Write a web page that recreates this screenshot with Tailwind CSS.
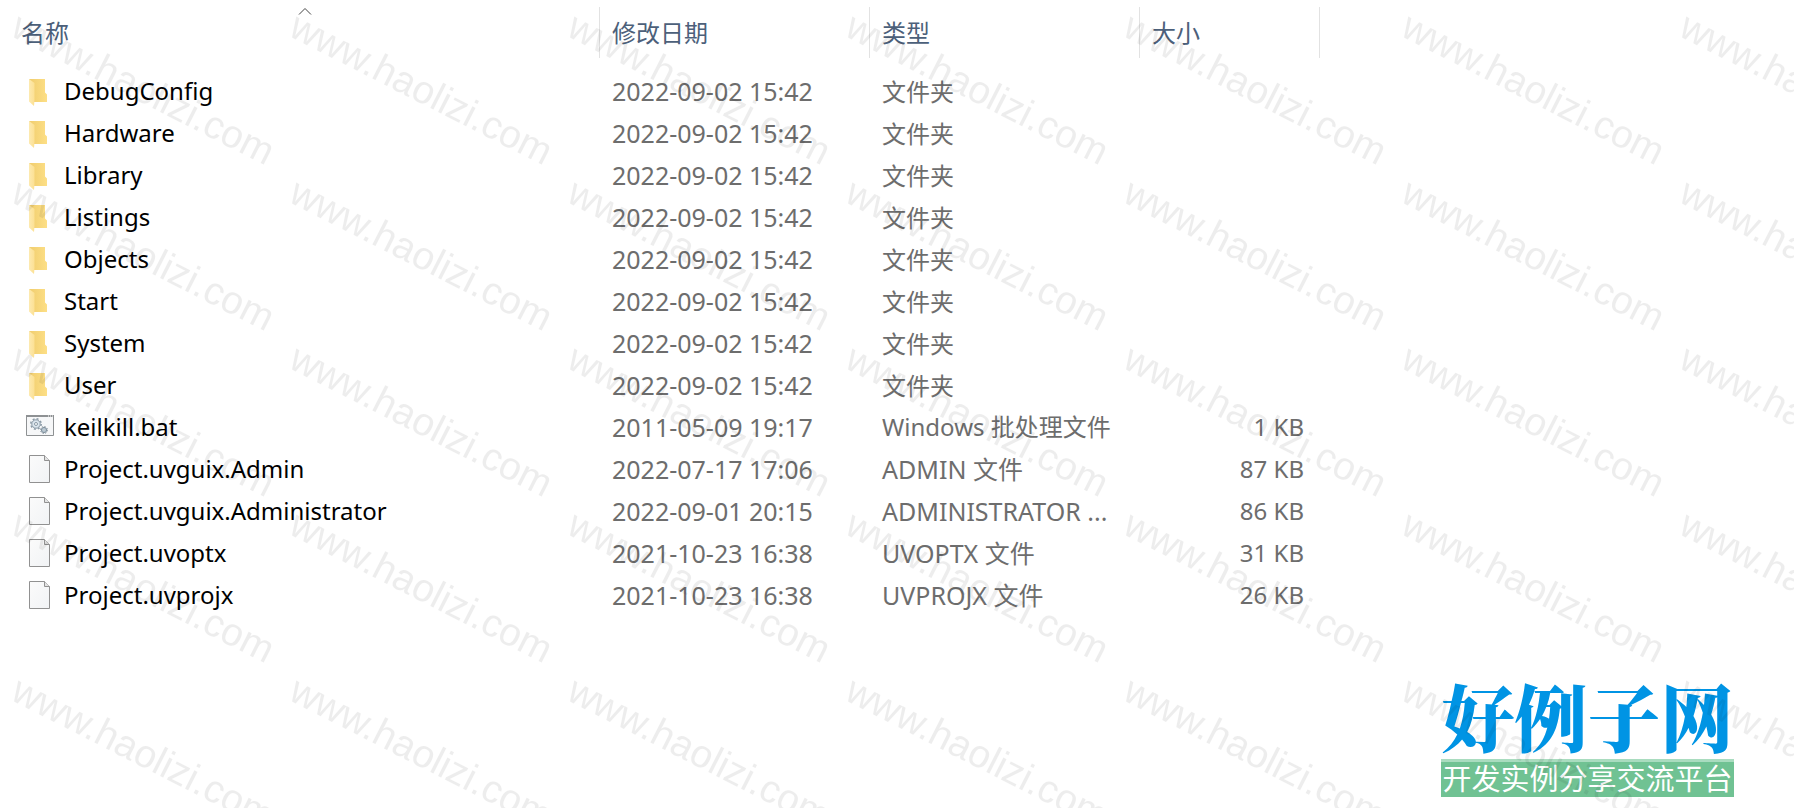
<!DOCTYPE html>
<html lang="zh-CN">

<head>
    <meta charset="UTF-8">
    <meta name="viewport" content="width=device-width, initial-scale=1">
    <title>Project</title>
    <script src="https://cdn.jsdelivr.net/npm/@tailwindcss/browser@4"></script>
</head>

<body class="bg-white font-['Noto_Sans','Noto_Sans_CJK_SC',sans-serif]">
    <!-- Icons -->
    <svg class="absolute size-0">
        <defs>
            <linearGradient id="folderBack" x1="0" x2="1">
                <stop offset="0" stop-color="#f0cd6e" />
                <stop offset="1" stop-color="#fddf86" />
            </linearGradient>
            <linearGradient id="folderFront" x1="0" x2="1">
                <stop offset="0" stop-color="#fdeab0" />
                <stop offset="1" stop-color="#fce093" />
            </linearGradient>
            <linearGradient id="paper" x1="0" y1="0" x2="1" y2="1">
                <stop offset="0" stop-color="#fbfbfb" />
                <stop offset="1" stop-color="#f1f3f5" />
            </linearGradient>
        </defs>
        <symbol id="folder" viewBox="0 0 28 30">
            <path d="M3 2H19V15.500L21 17.500V25H8V14Z" fill="url(#folderBack)" />
            <path d="M3 2L8.500 6V23L8 29L3 24.500Z" fill="url(#folderFront)" />
        </symbol>
        <symbol id="file" viewBox="0 0 28 30">
            <path d="M3.500 .5H18.500L23.500 5.500V27.500H3.500Z" fill="url(#paper)" stroke="#919191" />
            <path d="M18.500 .5V5.500H23.500" fill="#e3e3e3" stroke="#919191" />
        </symbol>
        <symbol id="bat" viewBox="0 0 28 30">
            <path d="M.5 2.500H27.500V22.500H.5Z" fill="#f6f7f8" stroke="#8e9193" />
            <path d="M0 3H28" stroke="#8e9193" stroke-width="2" />
            <path d="M22 3H23M24 3H25M26 3H27" stroke="#fff" />
            <circle cx="10" cy="11" r="4.200" fill="#dbe6ee" stroke="#8b9aa6" />
            <circle cx="10" cy="11" r="5.200" fill="none" stroke="#8b9aa6" stroke-width="1.500" stroke-dasharray="2 2.080" />
            <circle cx="10" cy="11" r="1.500" fill="#fff" stroke="#8b9aa6" />
            <circle cx="18" cy="17" r="2.600" fill="#b9cbd8" stroke="#82909b" />
            <circle cx="18" cy="17" r="3.500" fill="none" stroke="#82909b" stroke-dasharray="1.400 1.350" />
            <circle cx="18" cy="17" r="1" fill="#fff" stroke="#82909b" stroke-width=".5" />
        </symbol>
    </svg>

    <main class="relative min-h-screen overflow-hidden pt-[7px] pl-[9px]">
        <table class="w-full table-fixed text-left text-[25px] leading-10 text-[#6d6d6d] whitespace-nowrap">
            <colgroup>
                <col class="w-[591px]">
                <col class="w-[270px]">
                <col class="w-[270px]">
                <col class="w-[180px]">
                <col>
            </colgroup>
            <thead class="text-2xl text-[#4c607a]">
                <tr class="h-16 align-top">
                    <th class="relative p-0 font-normal">
                        <svg class="absolute top-0 left-1/2 -ml-[7px] h-2 w-3.5" viewBox="0 0 14 8" fill="none" stroke="#444">
                            <path d="M1 7.500L7 1.500L13 7.500" />
                        </svg>
                        <div class="flex h-[51px] items-center border-r border-[#e2e2e2] pl-3">名称</div>
                    </th>
                    <th class="p-0 font-normal"><div class="flex h-[51px] items-center border-r border-[#e2e2e2] pl-3">修改日期</div></th>
                    <th class="p-0 font-normal"><div class="flex h-[51px] items-center border-r border-[#e2e2e2] pl-3">类型</div></th>
                    <th class="p-0 font-normal"><div class="flex h-[51px] items-center border-r border-[#e2e2e2] pl-3">大小</div></th>
                    <td></td>
                </tr>
            </thead>
            <tbody>
                <tr class="h-[42px]">
                    <td class="p-0"><div class="flex items-center gap-2.5 pl-[17px] text-2xl/10 text-black"><svg class="h-[30px] w-7"><use href="#folder" /></svg><span class="pb-0.5">DebugConfig</span></div></td>
                    <td class="p-0 pb-0.5 pl-3">2022-09-02 15:42</td>
                    <td class="p-0 pl-3 text-2xl/10">文件夹</td>
                    <td class="p-0 pr-4 pb-0.5 text-right text-2xl/10"></td>
                </tr>
                <tr class="h-[42px]">
                    <td class="p-0"><div class="flex items-center gap-2.5 pl-[17px] text-2xl/10 text-black"><svg class="h-[30px] w-7"><use href="#folder" /></svg><span class="pb-0.5">Hardware</span></div></td>
                    <td class="p-0 pb-0.5 pl-3">2022-09-02 15:42</td>
                    <td class="p-0 pl-3 text-2xl/10">文件夹</td>
                    <td class="p-0 pr-4 pb-0.5 text-right text-2xl/10"></td>
                </tr>
                <tr class="h-[42px]">
                    <td class="p-0"><div class="flex items-center gap-2.5 pl-[17px] text-2xl/10 text-black"><svg class="h-[30px] w-7"><use href="#folder" /></svg><span class="pb-0.5">Library</span></div></td>
                    <td class="p-0 pb-0.5 pl-3">2022-09-02 15:42</td>
                    <td class="p-0 pl-3 text-2xl/10">文件夹</td>
                    <td class="p-0 pr-4 pb-0.5 text-right text-2xl/10"></td>
                </tr>
                <tr class="h-[42px]">
                    <td class="p-0"><div class="flex items-center gap-2.5 pl-[17px] text-2xl/10 text-black"><svg class="h-[30px] w-7"><use href="#folder" /></svg><span class="pb-0.5">Listings</span></div></td>
                    <td class="p-0 pb-0.5 pl-3">2022-09-02 15:42</td>
                    <td class="p-0 pl-3 text-2xl/10">文件夹</td>
                    <td class="p-0 pr-4 pb-0.5 text-right text-2xl/10"></td>
                </tr>
                <tr class="h-[42px]">
                    <td class="p-0"><div class="flex items-center gap-2.5 pl-[17px] text-2xl/10 text-black"><svg class="h-[30px] w-7"><use href="#folder" /></svg><span class="pb-0.5">Objects</span></div></td>
                    <td class="p-0 pb-0.5 pl-3">2022-09-02 15:42</td>
                    <td class="p-0 pl-3 text-2xl/10">文件夹</td>
                    <td class="p-0 pr-4 pb-0.5 text-right text-2xl/10"></td>
                </tr>
                <tr class="h-[42px]">
                    <td class="p-0"><div class="flex items-center gap-2.5 pl-[17px] text-2xl/10 text-black"><svg class="h-[30px] w-7"><use href="#folder" /></svg><span class="pb-0.5">Start</span></div></td>
                    <td class="p-0 pb-0.5 pl-3">2022-09-02 15:42</td>
                    <td class="p-0 pl-3 text-2xl/10">文件夹</td>
                    <td class="p-0 pr-4 pb-0.5 text-right text-2xl/10"></td>
                </tr>
                <tr class="h-[42px]">
                    <td class="p-0"><div class="flex items-center gap-2.5 pl-[17px] text-2xl/10 text-black"><svg class="h-[30px] w-7"><use href="#folder" /></svg><span class="pb-0.5">System</span></div></td>
                    <td class="p-0 pb-0.5 pl-3">2022-09-02 15:42</td>
                    <td class="p-0 pl-3 text-2xl/10">文件夹</td>
                    <td class="p-0 pr-4 pb-0.5 text-right text-2xl/10"></td>
                </tr>
                <tr class="h-[42px]">
                    <td class="p-0"><div class="flex items-center gap-2.5 pl-[17px] text-2xl/10 text-black"><svg class="h-[30px] w-7"><use href="#folder" /></svg><span class="pb-0.5">User</span></div></td>
                    <td class="p-0 pb-0.5 pl-3">2022-09-02 15:42</td>
                    <td class="p-0 pl-3 text-2xl/10">文件夹</td>
                    <td class="p-0 pr-4 pb-0.5 text-right text-2xl/10"></td>
                </tr>
                <tr class="h-[42px]">
                    <td class="p-0"><div class="flex items-center gap-2.5 pl-[17px] text-2xl/10 text-black"><svg class="h-[30px] w-7"><use href="#bat" /></svg><span class="pb-0.5">keilkill.bat</span></div></td>
                    <td class="p-0 pb-0.5 pl-3">2011-05-09 19:17</td>
                    <td class="p-0 pb-0.5 pl-3 text-2xl/10">Windows 批处理文件</td>
                    <td class="p-0 pr-4 pb-0.5 text-right text-2xl/10">1 KB</td>
                </tr>
                <tr class="h-[42px]">
                    <td class="p-0"><div class="flex items-center gap-2.5 pl-[17px] text-2xl/10 text-black"><svg class="h-[30px] w-7"><use href="#file" /></svg><span class="pb-0.5">Project.uvguix.Admin</span></div></td>
                    <td class="p-0 pb-0.5 pl-3">2022-07-17 17:06</td>
                    <td class="p-0 pb-0.5 pl-3">ADMIN 文件</td>
                    <td class="p-0 pr-4 pb-0.5 text-right text-2xl/10">87 KB</td>
                </tr>
                <tr class="h-[42px]">
                    <td class="p-0"><div class="flex items-center gap-2.5 pl-[17px] text-2xl/10 text-black"><svg class="h-[30px] w-7"><use href="#file" /></svg><span class="pb-0.5">Project.uvguix.Administrator</span></div></td>
                    <td class="p-0 pb-0.5 pl-3">2022-09-01 20:15</td>
                    <td class="p-0 pb-0.5 pl-3">ADMINISTRATOR ...</td>
                    <td class="p-0 pr-4 pb-0.5 text-right text-2xl/10">86 KB</td>
                </tr>
                <tr class="h-[42px]">
                    <td class="p-0"><div class="flex items-center gap-2.5 pl-[17px] text-2xl/10 text-black"><svg class="h-[30px] w-7"><use href="#file" /></svg><span class="pb-0.5">Project.uvoptx</span></div></td>
                    <td class="p-0 pb-0.5 pl-3">2021-10-23 16:38</td>
                    <td class="p-0 pb-0.5 pl-3">UVOPTX 文件</td>
                    <td class="p-0 pr-4 pb-0.5 text-right text-2xl/10">31 KB</td>
                </tr>
                <tr class="h-[42px]">
                    <td class="p-0"><div class="flex items-center gap-2.5 pl-[17px] text-2xl/10 text-black"><svg class="h-[30px] w-7"><use href="#file" /></svg><span class="pb-0.5">Project.uvprojx</span></div></td>
                    <td class="p-0 pb-0.5 pl-3">2021-10-23 16:38</td>
                    <td class="p-0 pb-0.5 pl-3">UVPROJX 文件</td>
                    <td class="p-0 pr-4 pb-0.5 text-right text-2xl/10">26 KB</td>
                </tr>
            </tbody>
        </table>

        <!-- Site logo -->
        <div class="absolute right-[60px] bottom-[11px] w-[293px] text-center whitespace-nowrap font-['Noto_Sans_CJK_SC',sans-serif]">
            <div class="font-['Noto_Serif_CJK_SC','Noto_Sans_CJK_SC',serif] text-[73px] leading-[88px] font-black text-[#0094e4]">好例子网</div>
            <div class="border-t-3 border-[#a9dcbf] bg-[#70c293] pb-1 text-[29px] leading-[31px] text-white">开发实例分享交流平台</div>
        </div>

        <!-- Watermark -->
        <svg class="pointer-events-none absolute inset-0 size-full">
            <defs>
                <pattern id="watermark" width="278" height="166" patternUnits="userSpaceOnUse">
                    <text class="fill-black/7 font-['Liberation_Sans',sans-serif] text-[39px]" transform="translate(9 35) rotate(27)">www.haolizi.com</text>
                </pattern>
            </defs>
            <rect width="100%" height="100%" fill="url(#watermark)" />
        </svg>
    </main>
</body>

</html>
